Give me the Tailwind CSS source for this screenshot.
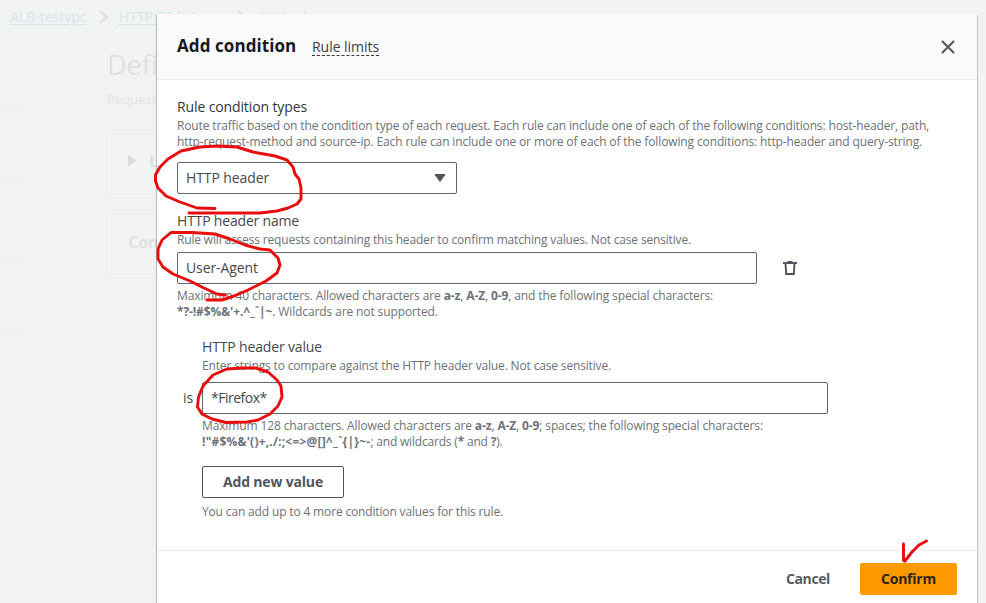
<!DOCTYPE html>
<html lang="en">
<head>
<meta charset="utf-8">
<title>Add condition</title>
<script src="https://cdn.jsdelivr.net/npm/@tailwindcss/browser@4"></script>
</head>
<body class="relative h-[603px] w-[986px] overflow-hidden bg-[#f1f3f3] font-['Open_Sans','Noto_Sans',sans-serif] text-sm text-[#45494d]">

<!-- Dimmed page behind the dialog -->
<div class="flex h-full flex-col whitespace-nowrap">
  <nav class="flex h-[34px] items-center pl-[10px] text-sm text-[#d7e3ea]">
    <span class="w-[77px] underline underline-offset-2">ALB-testvpc</span>
    <svg class="ml-[11px] mr-[10px] h-[14px] w-[11px]" viewBox="0 0 11 14" fill="none" stroke="#dcdfe0" stroke-width="2"><path d="M2 1l7 6-7 6"/></svg>
    <span class="w-[110px] underline underline-offset-2">HTTP:80 listener</span>
    <svg class="ml-[7px] mr-[12px] h-[14px] w-[11px]" viewBox="0 0 11 14" fill="none" stroke="#dcdfe0" stroke-width="2"><path d="M2 1l7 6-7 6"/></svg>
    <span class="text-[#e0e3e3]">Add rule</span>
  </nav>
  <div class="flex flex-1">
    <aside class="flex w-[107px] flex-col pr-[83px] pt-[73px]">
      <div class="h-[75px] border-t border-[#eef0f0]"></div>
      <div class="h-[76px] border-t border-[#eef0f0]"></div>
      <div class="h-[75px] border-t border-[#eef0f0]"></div>
      <div class="border-t border-[#eef0f0]"></div>
    </aside>
    <main class="flex flex-col pt-[13px]">
      <h1 class="h-9 w-[50px] overflow-hidden text-[27px] leading-9 text-[#dfe1e1]">Defi</h1>
      <p class="mt-[7px] h-[18px] w-[50px] overflow-hidden text-[13px] leading-[18px] text-[#e2e4e4]">Request</p>
      <section class="mt-[22px] flex h-[65px] w-[600px] items-center border border-[#edefef] bg-[#f2f4f4] pb-[4px] pl-[20px] text-base font-bold text-[#dfe1e1]">
        <svg class="mr-3 h-[11px] w-[9px]" viewBox="0 0 9 11"><path d="M0 0l9 5.500-9 5.500z" fill="#dadcdc"/></svg>
        L
      </section>
      <section class="mt-[15px] flex h-[65px] w-[600px] items-center border border-[#edefef] bg-[#f2f4f4] pb-[2px] pl-[20px] text-base font-bold text-[#dfe1e1]">Con</section>
    </main>
  </div>
</div>

<!-- Dialog -->
<div role="dialog" class="absolute left-[157px] top-[14px] flex h-[600px] w-[820px] flex-col whitespace-nowrap bg-white shadow-[0_1px_1px_0_rgba(0,28,36,0.3),1px_1px_1px_0_rgba(0,28,36,0.15),-1px_1px_1px_0_rgba(0,28,36,0.2)]">
  <header class="flex h-[66px] shrink-0 items-center border-b border-[#eaeded] bg-[#fafafa] pl-[20px] pr-[22px]">
    <h2 class="w-[135px] pb-px text-[17px] font-bold tracking-[0.08px] text-[#16191f]">Add condition</h2>
    <span class="h-[18px] border-b border-dashed border-[#33373c] leading-[18px] tracking-[-0.04px] text-[#3c4045]">Rule limits</span>
    <svg class="ml-auto h-[14px] w-[14px]" viewBox="0 0 14 14" fill="none" stroke="#50565c" stroke-width="2" stroke-linecap="round"><path d="M1.500 1.500l11 11M12.500 1.500l-11 11"/></svg>
  </header>

  <div class="flex h-[470px] shrink-0 flex-col px-[20px] pt-[16px]">
    <label class="h-[22px] leading-[22px] tracking-[-0.12px] text-[#303439]">Rule condition types</label>
    <p class="text-xs leading-4 text-[#6c7276]"><span class="tracking-[-0.141px]">Route traffic based on the condition type of each request. Each rule can include one of each of the following conditions: host-header, path,</span><br><span class="tracking-[-0.125px]">http-request-method and source-ip. Each rule can include one or more of each of the following conditions: http-header and query-string.</span></p>
    <div class="mt-[12px] flex h-[32px] w-[280px] items-center justify-between rounded-[2px] border border-[#60676c] pl-[8px] pr-[10px] tracking-[-0.1px]">
      HTTP header
      <svg class="h-[8px] w-[12px]" viewBox="0 0 12 8"><path d="M1 0.500h10L6 7.500z" fill="#50565c" stroke="#50565c" stroke-linejoin="round"/></svg>
    </div>

    <label class="mt-[16px] h-[22px] leading-[22px] tracking-[-0.19px]">HTTP header name</label>
    <p class="text-xs leading-4 tracking-[-0.167px] text-[#6c7276]">Rule will assess requests containing this header to confirm matching values. Not case sensitive.</p>
    <div class="mt-[4px] flex items-center">
      <div class="flex h-[32px] w-[580px] items-center rounded-[2px] border border-[#60676c] pl-[8px] tracking-[-0.09px]">User-Agent</div>
      <svg class="ml-[26px] h-[16px] w-[14px]" viewBox="0 0 14 16" fill="none" stroke="#50565c" stroke-width="2"><path d="M0 3h14M2.500 3l.7 11h7.600l.7-11"/><path d="M4.500 1.500h5" stroke-width="1"/></svg>
    </div>
    <p class="mt-[4px] text-xs leading-4 tracking-[-0.115px] text-[#6c7276]">Maximum 40 characters. Allowed characters are <b>a-z</b>, <b>A-Z</b>, <b>0-9</b>, and the following special characters:<br><b>*?-!#$%&amp;'+.^_`|~</b>. Wildcards are not supported.</p>

    <div class="mt-[16px] flex">
      <span class="w-[25px] shrink-0 pl-[6px] pt-[52px] leading-5">is</span>
      <div class="flex flex-col">
        <label class="h-[22px] leading-[22px] tracking-[-0.152px]">HTTP header value</label>
        <p class="text-xs leading-4 tracking-[-0.156px] text-[#6c7276]">Enter strings to compare against the HTTP header value. Not case sensitive.</p>
        <div class="mt-[8px] flex h-[32px] w-[626px] items-center rounded-[2px] border border-[#60676c] pl-[8px] tracking-[-0.5px]">*Firefox*</div>
        <p class="mt-[4px] text-xs leading-4 text-[#6c7276]"><span class="tracking-[-0.127px]">Maximum 128 characters. Allowed characters are <b>a-z</b>, <b>A-Z</b>, <b>0-9</b>; spaces; the following special characters:</span><br><b class="tracking-[0.2px]">!"#$%&amp;'()+,./:;&lt;=&gt;@[]^_`{|}~-</b><span class="tracking-[-0.19px]">; and wildcards (<b>*</b> and <b>?</b>).</span></p>
        <button class="mt-[16px] h-[32px] w-[142px] rounded-[2px] border border-[#50565c] font-bold tracking-[-0.175px] text-[#50565c]">Add new value</button>
        <p class="mt-[6px] text-xs leading-4 tracking-[-0.153px] text-[#6c7276]">You can add up to 4 more condition values for this rule.</p>
      </div>
    </div>
  </div>

  <footer class="flex h-[64px] shrink-0 items-start justify-end border-t border-[#eaeded] pr-[20px] pt-[12px] font-bold">
    <button class="mr-[30px] h-[32px] tracking-[-0.39px] text-[#545b64]">Cancel</button>
    <button class="h-[32px] w-[97px] rounded-[2px] bg-[#ff9900] tracking-[-0.228px] text-[#2b241b]">Confirm</button>
  </footer>
</div>

<!-- Hand-drawn annotations -->
<svg class="pointer-events-none absolute left-0 top-0 h-[603px] w-[986px]" viewBox="0 0 986 603" fill="none" stroke="#e80c0c" stroke-width="2.900" stroke-linecap="round" stroke-linejoin="round">
  <path d="M215 208.500L197 208L180 202L166 196L158 188L155.500 181V175L160 167L168 159L181 151L200 147L217 146L237 147L253 152L275 156L287 160L293 167L295 174L299 179L301 188V199L297 204L288 208L277 211L260 213H189"/>
  <path d="M225 295L217 294L204 288L190 281L173 274L163 267L158 259L158 249L162 240L171 232.500H192L215 234L230 239L245 245L260 249L270 250L278 258L280 265L277 273L266 281L248 290L234 296L222 300H207"/>
  <path d="M256 368L268 372L277 380L281 386L282 397L278 406L270 414L258 420L247 422L226 422.500L212 419L202 414L197.500 407L198.500 397L203 386L213 375L227 369L242 368Z"/>
  <path d="M903.500 544V560.500L905 561L912 552L919 545L926.500 541"/>
</svg>
</body>
</html>
